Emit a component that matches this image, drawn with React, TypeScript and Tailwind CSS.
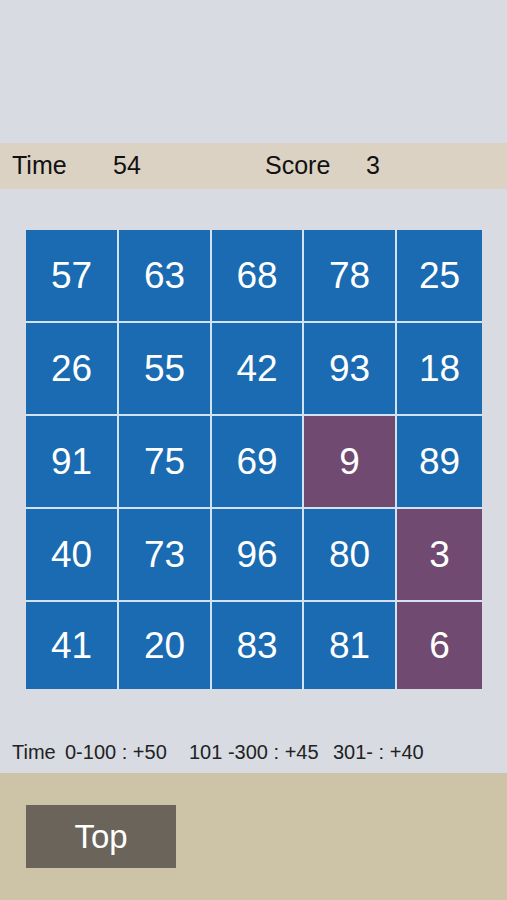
import React from "react";

const cells: number[][] = [
  [57, 63, 68, 78, 25],
  [26, 55, 42, 93, 18],
  [91, 75, 69, 9, 89],
  [40, 73, 96, 80, 3],
  [41, 20, 83, 81, 6],
];

// cells already tapped
const picked = new Set([9, 3, 6]);

export default function App() {
  return (
    <div
      className="w-[507px] h-[900px] bg-[#d8dbe2] flex flex-col overflow-hidden"
      style={{ fontFamily: '"Liberation Sans", Arial, sans-serif' }}
    >
      <div className="h-[143px]" />

      {/* status bar */}
      <div className="h-[46px] bg-[#dcd2c3] flex items-center text-[25px] text-[#111]">
        <span className="ml-[12px] w-[101px]">Time</span>
        <span className="w-[152px]">54</span>
        <span className="w-[101px]">Score</span>
        <span>3</span>
      </div>

      {/* board */}
      <div className="mt-[41px] ml-[26px] w-[456px] h-[459px] bg-[#d4e3f3] grid grid-cols-[91px_91px_90px_91px_85px] grid-rows-[91px_91px_91px_91px_87px] gap-[2px]">
        {cells.flat().map((n) => (
          <div
            key={n}
            className={`flex items-center justify-center text-white text-[37px] ${
              picked.has(n) ? "bg-[#714a72]" : "bg-[#1a6bb1]"
            }`}
          >
            {n}
          </div>
        ))}
      </div>

      <div className="mt-[48px] ml-[12px] flex text-[20px] leading-[30px] text-[#222] whitespace-pre">
        <span className="w-[53px]">Time</span>
        <span className="w-[124px]">0-100 : +50</span>
        <span className="w-[144px]">101 -300 : +45</span>
        <span>301- : +40</span>
      </div>

      {/* bottom bar */}
      <div className="mt-[6px] flex-1 bg-[#cdc4a8] pt-[32px] pl-[26px]">
        <button className="w-[150px] h-[63px] bg-[#6b645b] text-white text-[33px] flex items-center justify-center">
          Top
        </button>
      </div>
    </div>
  );
}
